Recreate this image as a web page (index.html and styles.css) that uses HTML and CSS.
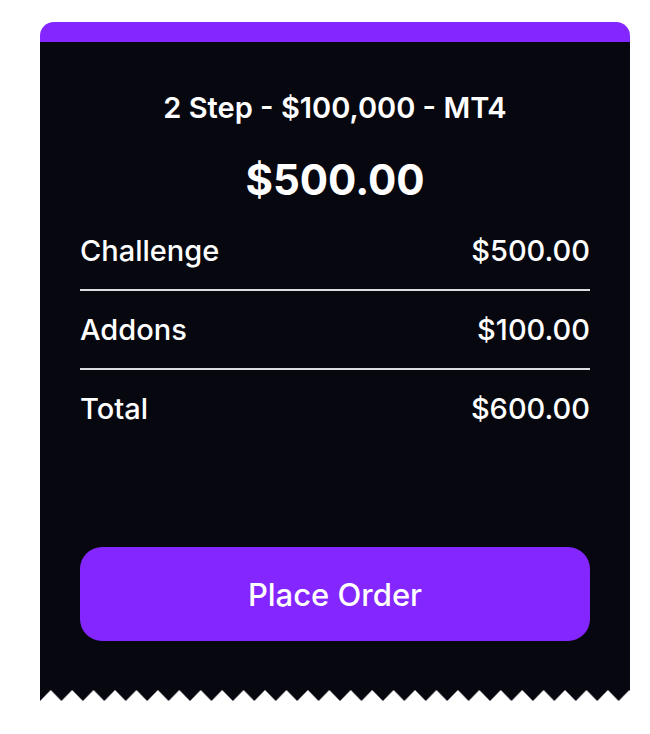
FILE: index.html
```html
<!DOCTYPE html>
<html lang="en">
<head>
<meta charset="utf-8">
<title>Order Summary</title>
<link rel="stylesheet" href="styles.css">
</head>
<body>
<div class="receipt">
  <div class="receipt-top"></div>
  <div class="receipt-body">
    <h2 class="plan">2 Step - $100,000 - MT4</h2>
    <div class="price">$500.00</div>
    <ul class="lines">
      <li class="line"><span>Challenge</span><span>$500.00</span></li>
      <li class="line"><span>Addons</span><span>$100.00</span></li>
      <li class="line"><span>Total</span><span>$600.00</span></li>
    </ul>
    <button class="order-btn" type="button">Place Order</button>
  </div>
  <svg class="receipt-edge" viewBox="0 0 590 11" preserveAspectRatio="none" aria-hidden="true">
    <defs>
      <pattern id="zigzag" x="-10.7" y="0" width="21.43" height="11" patternUnits="userSpaceOnUse">
        <polygon points="0,0 21.43,0 10.715,11" fill="#07080f"/>
      </pattern>
    </defs>
    <rect x="0" y="0" width="590" height="11" fill="url(#zigzag)"/>
  </svg>
</div>
</body>
</html>
```

FILE: styles.css
```css
* { box-sizing: border-box; }

body {
  margin: 0;
  background: #ffffff;
  font-family: Inter, "Noto Sans", sans-serif;
  color: #ffffff;
}

.receipt {
  width: 590px;
  margin: 22px 0 0 40px;
}

.receipt-top {
  height: 20px;
  background: #8426ff;
  border-radius: 14px 14px 0 0;
}

.receipt-body {
  background: #07080f;
  padding: 50px 40px 49px;
  display: flex;
  flex-direction: column;
}

.receipt-edge {
  display: block;
  width: 590px;
  height: 11px;
}

.plan {
  margin: 0;
  text-align: center;
  font-size: 29px;
  line-height: 32px;
  font-weight: 600;
}

.price {
  margin-top: 32px;
  text-align: center;
  font-size: 42px;
  line-height: 48px;
  font-weight: 700;
}

.lines {
  list-style: none;
  margin: 8px 0 0;
  padding: 0;
}

.line {
  display: flex;
  justify-content: space-between;
  align-items: center;
  padding: 22px 0 21px;
  font-size: 29px;
  line-height: 34px;
  font-weight: 500;
  border-bottom: 2px solid #dcdce2;
}

.line:last-child {
  border-bottom: none;
  padding-bottom: 22px;
}

.order-btn {
  margin-top: 99px;
  height: 94px;
  border: none;
  border-radius: 22px;
  background: #8426ff;
  color: #ffffff;
  font-family: inherit;
  font-size: 31px;
  font-weight: 500;
  cursor: pointer;
}
```
